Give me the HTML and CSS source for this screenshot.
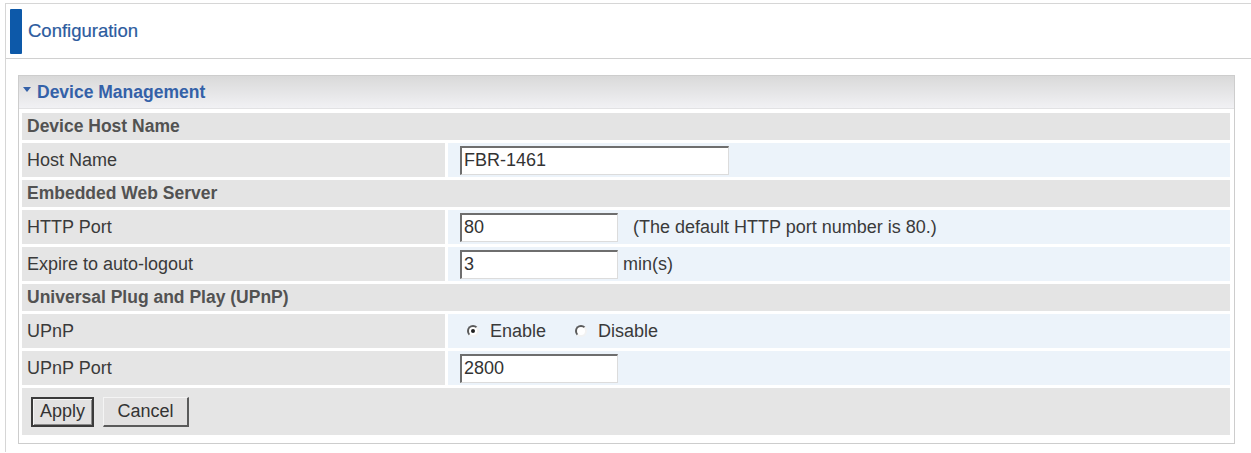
FILE: index.html
```html
<!DOCTYPE html>
<html lang="en">
<head>
<meta charset="utf-8">
<title>Configuration - Device Management</title>
<link rel="stylesheet" href="styles.css">
</head>
<body>
<div class="page">
  <div class="page-head">
    <span class="head-bar"></span>
    <span class="head-title">Configuration</span>
  </div>
  <div class="panel">
    <div class="panel-head"><span class="tri"></span>Device Management</div>
    <div class="panel-body">
      <table class="form">
        <tr class="section"><td colspan="2">Device Host Name</td></tr>
        <tr class="data">
          <td class="label">Host Name</td>
          <td class="value"><input class="txt wide" type="text" value="FBR-1461"></td>
        </tr>
        <tr class="section"><td colspan="2">Embedded Web Server</td></tr>
        <tr class="data">
          <td class="label">HTTP Port</td>
          <td class="value"><input class="txt" type="text" value="80"><span class="hint">(The default HTTP port number is 80.)</span></td>
        </tr>
        <tr class="data">
          <td class="label">Expire to auto-logout</td>
          <td class="value"><input class="txt" type="text" value="3"><span class="unit">min(s)</span></td>
        </tr>
        <tr class="section"><td colspan="2">Universal Plug and Play (UPnP)</td></tr>
        <tr class="data">
          <td class="label">UPnP</td>
          <td class="value">
            <label class="opt"><input class="radio" type="radio" name="upnp" checked><span>Enable</span></label>
            <label class="opt second"><input class="radio" type="radio" name="upnp"><span>Disable</span></label>
          </td>
        </tr>
        <tr class="data">
          <td class="label">UPnP Port</td>
          <td class="value"><input class="txt" type="text" value="2800"></td>
        </tr>
        <tr class="buttons">
          <td colspan="2"><button class="btn default" type="button">Apply</button><button class="btn" type="button">Cancel</button></td>
        </tr>
      </table>
    </div>
  </div>
</div>
</body>
</html>
```

FILE: styles.css
```css
html, body {
  margin: 0;
  padding: 0;
  background: #ffffff;
}

body {
  font-family: "Liberation Sans", Arial, sans-serif;
  font-size: 18px;
  color: #3a3a3a;
}

.page {
  margin: 3px 0 0 5px;
  border-top: 1px solid #d6d6d6;
  border-left: 1px solid #d6d6d6;
  height: 449px;
  box-sizing: border-box;
}

.page-head {
  height: 54px;
  border-bottom: 1px solid #d0d0d0;
  display: flex;
  align-items: center;
}

.head-bar {
  width: 12px;
  height: 45px;
  margin-left: 4px;
  background: #0d59a9;
  border-radius: 1px;
}

.head-title {
  margin-left: 6px;
  font-size: 18.5px;
  color: #2c5b9e;
  margin-top: 0;
  -webkit-text-stroke: 0.2px #2c5b9e;
}

.panel {
  margin: 16px 0 0 12px;
  width: 1217px;
  box-sizing: border-box;
  border: 1px solid #cdcdcd;
  background: #ffffff;
}

.panel-head {
  height: 32px;
  display: flex;
  align-items: center;
  background: linear-gradient(#d9d9d9, #eaeaec 70%, #f1f1f4);
  border-bottom: 1px solid #e2e2e4;
  color: #3461a8;
  font-weight: bold;
  font-size: 17.5px;
  padding-left: 4px;
}

.tri {
  width: 0;
  height: 0;
  border-left: 4px solid transparent;
  border-right: 4px solid transparent;
  border-top: 5px solid #3461a8;
  margin-right: 6px;
  margin-top: -6px;
}

.panel-body {
  padding: 1px 1px 5px 0;
}

.form {
  width: 100%;
  border-collapse: separate;
  border-spacing: 3px;
}

.form td {
  padding: 0;
  vertical-align: middle;
}

.section td {
  height: 27px;
  background: #e4e4e4;
  font-weight: bold;
  font-size: 17.5px;
  color: #525252;
  padding-left: 5px;
}

.data td {
  height: 34px;
}

.label {
  width: 418px;
  padding-left: 5px !important;
  background: #e5e5e5;
}

.value {
  background: #ecf3fa;
  padding-left: 12px !important;
  white-space: nowrap;
}

.txt {
  box-sizing: border-box;
  width: 158px;
  height: 29px;
  margin: 0;
  padding: 0 0 0 2px;
  border-style: solid;
  border-width: 2px 1px 1px 2px;
  border-color: #6e6e6e #dcdcdc #dcdcdc #6e6e6e;
  background: #ffffff;
  font-family: "Liberation Sans", Arial, sans-serif;
  font-size: 18px;
  color: #333333;
  vertical-align: middle;
  outline: none;
}

.txt.wide {
  width: 269px;
}

.hint {
  margin-left: 15px;
  vertical-align: middle;
}

.unit {
  margin-left: 5px;
  vertical-align: middle;
}

.opt {
  display: inline-flex;
  align-items: center;
  margin-left: 7px;
  vertical-align: middle;
}

.opt.second {
  margin-left: 24px;
}

.radio {
  appearance: none;
  -webkit-appearance: none;
  width: 12px;
  height: 12px;
  margin: 0 11px 0 0;
  border-radius: 50%;
  box-sizing: border-box;
  border: 2px solid;
  border-color: #5a5a5a #f2f2f2 #f2f2f2 #5a5a5a;
  background: #ffffff;
  position: relative;
}

.radio:checked::after {
  content: "";
  position: absolute;
  left: 2px;
  top: 2px;
  width: 4px;
  height: 4px;
  border-radius: 50%;
  background: #222222;
}

.buttons td {
  height: 47px;
  background: #e5e5e5;
  padding-left: 9px;
}

.btn {
  box-sizing: border-box;
  height: 30px;
  margin: 0 9px 0 0;
  padding: 0 8px;
  font-family: "Liberation Sans", Arial, sans-serif;
  font-size: 18px;
  color: #333333;
  background: #e2e1e1;
  border-style: solid;
  border-width: 1px 2px 2px 1px;
  border-color: #f4f4f4 #5a5a5a #5a5a5a #f4f4f4;
  vertical-align: middle;
  width: 86px;
}

.btn.default {
  width: 63px;
  border: 2px solid #3a3a3a;
  box-shadow: inset 1px 1px 0 #f4f4f4, inset -1px -1px 0 #8a8a8a;
  padding: 0 4px;
}
```
